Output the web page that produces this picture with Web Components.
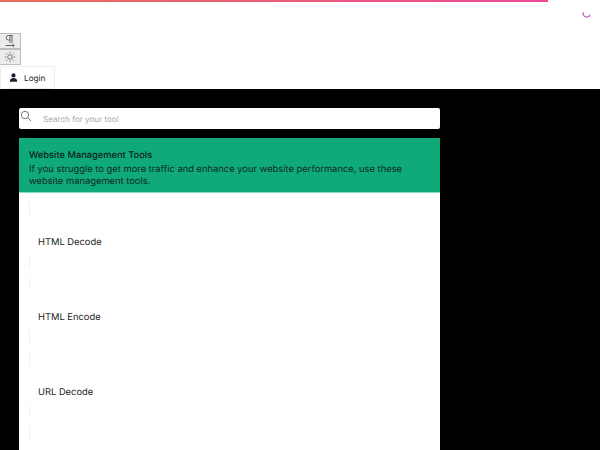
<!DOCTYPE html>
<html><head><meta charset="utf-8"><title>Tools</title>
<style>
html,body{margin:0;padding:0;height:450px;overflow:hidden;background:#000;font-family:Inter,"Liberation Sans",sans-serif;text-rendering:geometricPrecision}
</style></head><body>
<template id="t-bar"><style>
:host{display:block;height:89px;background:#fff;position:relative;box-sizing:border-box;padding-top:33px}
.progress{position:absolute;left:0;top:0;width:548px;height:2px;background:linear-gradient(90deg,#e8705a,#ec4899)}
.spin{position:absolute;left:582px;top:9px;width:10px;height:10px}
.tool{display:flex;align-items:center;justify-content:center;width:21px;height:16px;background:#ececea;border:1px solid #bdbdbd;box-sizing:border-box;border-left:0}
.login{display:flex;align-items:center;gap:6px;width:55px;height:23px;box-sizing:border-box;margin-top:1px;padding-left:8px;background:#fff;border:1px solid #eee;border-radius:2px;font-size:8.200px;color:#222}
</style>
<div class="progress"></div>
<svg class="spin" viewBox="0 0 10 10" fill="none"><path d="M1.300 3.200A3.600 3.600 0 0 0 8.200 5.600" stroke="#c04bb4" stroke-width="1.100"/></svg>
<div class="tool"><svg width="12" height="14" viewBox="0 0 12 14" fill="none" stroke="#444" stroke-width=".8"><path d="M8.500 1.500H4.500a2 2 0 0 0 0 4.500H6M6 1.500V9M8 1.500V9M1.500 11.500H10M8.500 10l1.800 1.500L8.500 13"/></svg></div>
<div class="tool"><svg width="12" height="12" viewBox="0 0 12 12" fill="none" stroke="#666" stroke-width=".9"><circle cx="6" cy="6" r="2.300"/><path d="M6 .8v1.400M6 9.800v1.400M.8 6h1.400M9.800 6h1.400M2.300 2.300l1 1M8.700 8.700l1 1M2.300 9.700l1-1M8.700 3.300l1-1"/></svg></div>
<div class="login"><svg width="9" height="9" viewBox="0 0 9 10" fill="#1a2230"><circle cx="4.500" cy="2.700" r="2.300"/><path d="M.4 9.700C.4 6.800 2 5.600 4.500 5.600S8.600 6.800 8.600 9.700z"/></svg><span>Login</span></div>
</template>
<template id="t-search"><style>
:host{display:flex;align-items:center;height:21px;background:#fff;border-radius:2px;position:relative;padding-left:24px;font-size:8.100px;color:#a9a9ad}
svg{position:absolute;left:1px;top:2px}
</style>
<svg width="12" height="12" viewBox="0 0 12 12" fill="none" stroke="#777" stroke-width="1"><circle cx="5" cy="5" r="3.700"/><path d="M7.800 7.800L11 11"/></svg><slot></slot></template>
<template id="t-card"><style>
:host{display:block;background:#fff;border-radius:2px 2px 0 0;margin-top:9px;height:312px}
header{height:55px;box-sizing:border-box;background:#10a97a;border-bottom:1px solid #7fe0c4;border-radius:2px 2px 0 0;padding:12px 10px 0;color:#0b2a22;font-size:9.370px;line-height:12px}
h2{font-size:9.300px;font-weight:500;margin:0 0 2px;line-height:12px;color:#0a1f19}
p{margin:0}
.list{display:flex;flex-direction:column;padding-top:9px}
</style>
<header><h2><slot name="title"></slot></h2><p><slot name="text"></slot></p></header>
<div class="list"><slot></slot></div></template>
<template id="t-row"><style>
:host{display:flex;flex-direction:column;height:75px;box-sizing:border-box;flex:none}
:host([stub]){height:13px}
:host([stub]) .name,:host([stub]) i+.name+i{display:none}
i{display:block;width:1px;height:13px;margin-left:10px;background:#f0f0f0}
.name{height:40px;box-sizing:border-box;padding:22px 0 0 19px;font-size:9.350px;line-height:12px;color:#1c1c1c}
</style><i></i><div class="name"><slot></slot></div><i></i></template>
<template id="t-main"><style>
:host{display:block;width:421px;height:342px;box-sizing:content-box;padding:19px 0 0 19px;background:#000}
</style><slot></slot></template>
<app-bar></app-bar>
<app-main>
<search-box>Search for your tool</search-box>
<tool-card>
<span slot="title">Website Management Tools</span>
<span slot="text">If you struggle to get more traffic and enhance your website performance, use these website management tools.</span>
<tool-row>HTML Decode</tool-row>
<tool-row>HTML Encode</tool-row>
<tool-row>URL Decode</tool-row>
<tool-row stub></tool-row>
</tool-card>
</app-main>
<script>
for(const [n,t] of [['app-bar','t-bar'],['search-box','t-search'],['tool-card','t-card'],['tool-row','t-row'],['app-main','t-main']]){
customElements.define(n,class extends HTMLElement{constructor(){super();this.attachShadow({mode:'open'}).appendChild(document.getElementById(t).content.cloneNode(true));}});
}
</script>
</body></html>
